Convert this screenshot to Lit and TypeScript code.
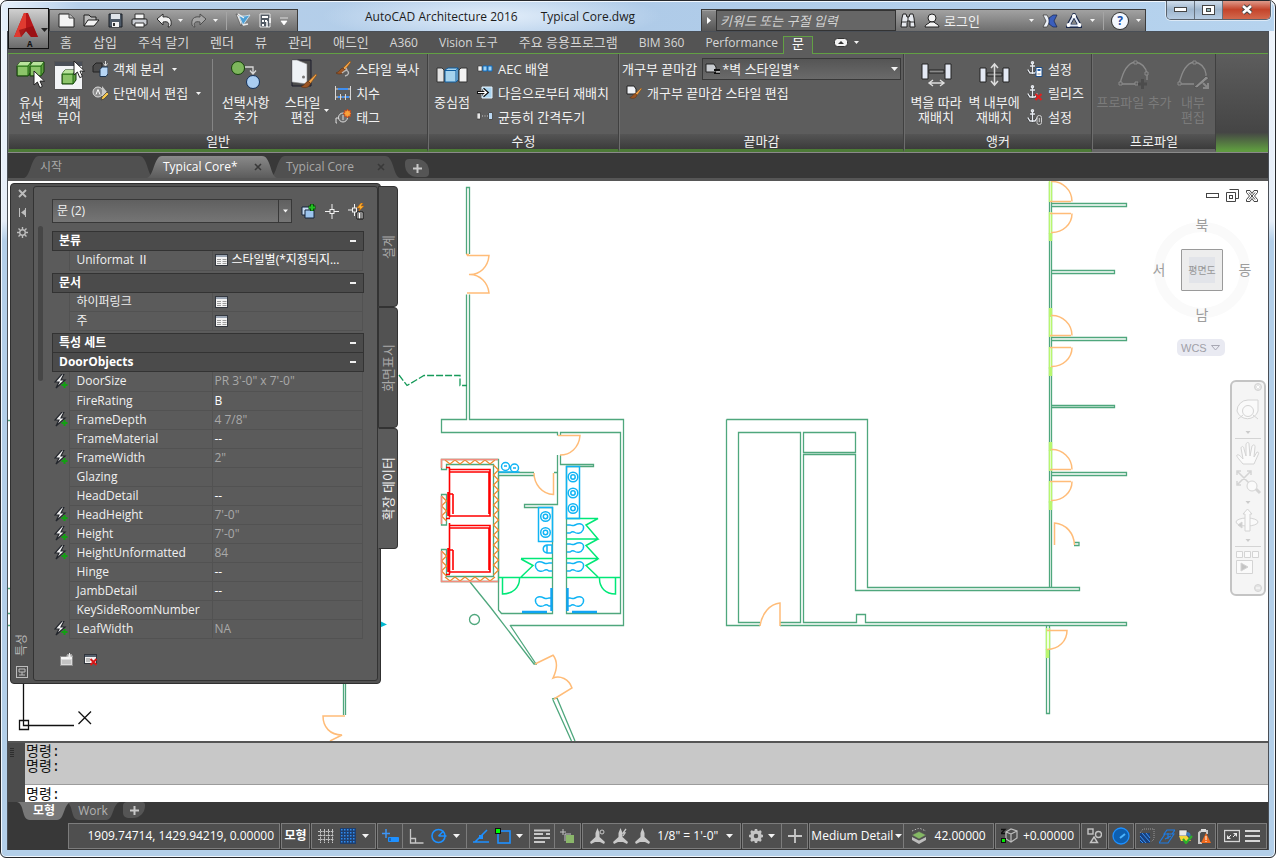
import { LitElement, html, css, svg, nothing, TemplateResult } from "lit";
import { customElement, state } from "lit/decorators.js";
import { classMap } from "lit/directives/class-map.js";

type Art = ReturnType<typeof svg>;

const icon = (w: number, h: number, art: Art, cls = "") =>
  html`<svg class="ic ${cls}" width=${w} height=${h} viewBox="0 0 ${w} ${h}" aria-hidden="true">${art}</svg>`;

const caret = html`<svg class="ic caret" width="7" height="4" viewBox="0 0 7 4" aria-hidden="true"><path d="M0 0h7L3.5 4z" fill="#f4f4f4"/></svg>`;
const smallCaret = html`<svg class="ic caret" width="5" height="3" viewBox="0 0 5 3" aria-hidden="true"><path d="M0 0h5L2.5 3z" fill="#f4f4f4"/></svg>`;

const cursor = svg`<path d="M0 0v14l3.4-3 2.4 5.6 2.6-1.1-2.4-5.4h4.6z" fill="#fff" stroke="#222" stroke-width="1"/>`;
const brush = svg`<path d="M15 0 8 7l2 2 6-8z" fill="#f0a045" stroke="#7a4a18" stroke-width=".6"/><path d="M8 7c-3 0-3 4-7 5 3 2 8 1 9-3z" fill="#9a5525" stroke="#5e3010" stroke-width=".6"/>`;
const cube = svg`<path d="M1 5 4 1h11v10l-3 4H1z" fill="#5fa041" stroke="#123c08"/><path d="M1 5 4 1h11l-3 4z" fill="#b9e39c"/><path d="M2 6h10v8H2z" fill="#8cc46a"/><path d="M12 5v10M1 5h11l3-4" stroke="#1f6a10" fill="none"/>`;

const anchor = svg`<g stroke="#303030" stroke-width="2.600" fill="none"><path d="M5.500 2v11M1 9l2 3h5l2-3M3 5h5"/></g><g stroke="#e8ecf2" stroke-width="1.400" fill="none"><circle cx="5.500" cy="1.800" r="1"/><path d="M5.500 3v10M0.800 8.500 3 12h5l2.200-3.500M3 5h5"/></g>`;

const art: Record<string, Art> = {
  newFile: svg`<path d="M1 1h10l5 4v9H1z" fill="#f4f4f4" stroke="#222"/><path d="M11 1v4h5" fill="#bbb" stroke="#444"/>`,
  open: svg`<path d="M1 13V2h5l2 2h5v3" fill="#bcbcbc" stroke="#1f1f1f"/><path d="m1 13 4-6h11l-5 6z" fill="#f4f4f4" stroke="#1f1f1f"/>`,
  save: svg`<path d="M1 1h13v13H1z" fill="#4e5a68" stroke="#1a1e24"/><path d="M3 1h9v5H3z" fill="#dfe4ea"/><path d="M4 9h7v5H4z" fill="#f2f2f2"/><path d="M5 10h2v3H5z" fill="#333"/>`,
  print: svg`<path d="M4 1h9v5H4z" fill="#f6f6f6" stroke="#333"/><rect x="1" y="6" width="15" height="6" rx="1" fill="#c9ccd2" stroke="#222"/><path d="M4 10h9v4H4z" fill="#fff" stroke="#333"/>`,
  undo: svg`<path d="M1 6 7 1v3c6-1 9 2 8 8-1 2-2 2-3 2 2-4 0-6-5-5v3z" fill="#f0f0f0" stroke="#2a2a2a"/>`,
  redo: svg`<path d="M15 6 9 1v3C3 3 0 6 1 12c1 2 2 2 3 2-2-4 0-6 5-5v3z" fill="#a6a6a6" stroke="#4e4e4e"/>`,
  reconcile: svg`<path d="m1 1 3 1 3 8-1 3z" fill="#e8e8e8" stroke="#444" stroke-width=".6"/><path d="m4 3 4 9 7-10-5 1z" fill="#4c9ed4" stroke="#dcecf8" stroke-width=".8"/><path d="m3 1 6 4M8 12l5-1" stroke="#eee" stroke-width="1.500"/>`,
  project: svg`<path d="M1 1h10v13H1z" fill="#525a64" stroke="#e8e8e8"/><path d="M3 3h6v2H3zM3 7h2v2H3zM3 11h2v2H3zM6 7h2v2H6z" fill="#fff"/><path d="M8 8v6M11 5v5" stroke="#fff" stroke-width="1.500"/>`,
  binoc: svg`<path d="M1 14 2 5l1-4h3l1 3h2l1-3h3l1 4 1 9h-5V8H7v6z" fill="#e6e9ee" stroke="#222"/><path d="M2 9h4M10 9h4M8 4v4" stroke="#333"/>`,
  user: svg`<circle cx="8" cy="5" r="4" fill="#f4f4f4" stroke="#222"/><path d="M1 14c0-3 4-3 5-5h4c1 2 5 2 5 5z" fill="#f4f4f4" stroke="#222"/>`,
  exchange: svg`<path d="M1 1h4l3 6-3 6H1l3-6z" fill="#eef2f8" stroke="#333" stroke-width=".7"/><path d="M15 1h-4L7 4v6l4 3h4l-3-6z" fill="#3a5ebc" stroke="#16244e" stroke-width=".7"/>`,
  a360: svg`<path d="M8 2 14 13H2z" fill="none" stroke="#1c2a4c" stroke-width="4"/><path d="M8 2.500 13.500 12.500H2.500z" fill="none" stroke="#dfe7f5" stroke-width="2"/><circle cx="8" cy="3" r="2" fill="#fff"/><circle cx="2.500" cy="12" r="2" fill="#fff"/><circle cx="13.500" cy="12" r="2" fill="#fff"/>`,
  select: svg`<g transform="translate(0 1)">${cube}</g><g transform="translate(13 1)">${cube}</g><g transform="translate(18 11)">${cursor}</g>`,
  viewer: svg`<rect x=".5" y="1.500" width="28" height="28" fill="#f2f4f6" stroke="#555"/><path d="M1 2h27v4H1z" fill="#4a4f58"/><g transform="translate(7 9)">${cube}</g><g transform="translate(20 1)">${cursor}</g>`,
  isolate: svg`<path d="m1 5 3-3h6v7l-2 2H1z" fill="#4b4b4b" stroke="#222"/><path d="M8 8.500 10 6h6v7l-2 2.500H8z" fill="#b7d6f5" stroke="#1c3450"/><path d="M13.500 0v4m-2-1.500L13.500 5l2-2.500" stroke="#e0e0e0" fill="none"/>`,
  section: svg`<circle cx="6" cy="7" r="5" fill="#8c8c8c" stroke="#ddd"/><path d="m10 1 5 6-5 6z" fill="#c8c8c8"/><path d="m4 9.500 2-5 2 5" stroke="#fff" fill="none"/><path d="m9 15 1-3 5-5 2 2-5 5z" fill="#f6c64b" stroke="#333" stroke-width=".7"/>`,
  addSel: svg`<circle cx="8" cy="8" r="6.500" fill="#7db65c" stroke="#14400a"/><path d="M15 7h8v6m-3-2.500L23 14l3-3.500" fill="none" stroke="#d8d8d8" stroke-width="1.300"/><circle cx="23" cy="22" r="6.500" fill="#a9cdf2" stroke="#12305a"/>`,
  style: svg`<path d="M3 1h19v26H3z" fill="#4c4c4c" stroke="#1c1c2c"/><path d="M3 1h5l10 4v20L3 23z" fill="#eef2f6" stroke="#888" stroke-width=".6"/><circle cx="14.500" cy="18" r="1.500" fill="#777"/><g transform="translate(11 15) scale(1.050)">${brush}</g>`,
  styleCopy: svg`${brush}<path d="M7 12l4-3c4 2 3 5-1 6m1-8 1 2-2 1" stroke="#b9b9b9" fill="none" stroke-width="1.300"/>`,
  dim: svg`<path d="M.5 1v14M15.500 1v14M1 4h14M1 12h14M5.500 9v6M10.500 9v6" stroke="#d8d8d8" fill="none"/><path d="M3 4h10M3 12h2M7 12h2M11 12h3" stroke="#3f8ef0" stroke-width="2"/>`,
  tag: svg`<circle cx="8" cy="8.500" r="4.500" fill="#6b6b6b" stroke="#ddd"/><path d="M1 14V9h3M8 6v5M1 14h1" stroke="#ddd" fill="none"/><path d="m12.500 0 1 2 2-.5-.5 2 2 1-2 1 .5 2-2-.5-1 2-1-2-2 .5.500-2-2-1 2-1-.5-2 2 .5z" fill="#f9a23c" stroke="#d23c10" stroke-width=".7"/>`,
  center: svg`<path d="M1 2h5l2 2v12H1z" fill="#e4e4e4" stroke="#333"/><path d="M9 4l3-2h10v12l-2 2H9z" fill="#a5d3ee" stroke="#0f5c9e"/><path d="M9 4.500h11v11M20 4.500 22 2" stroke="#0f5c9e" fill="none"/><path d="M23 4l2-2h6v14h-8z" fill="#f2f2f2" stroke="#333"/>`,
  array: svg`<path d="M1 5h4v5H1z" fill="#f2f2f2" stroke="#333" stroke-width=".6"/><path d="M6 5h4v5H6zM11 5h4v5h-4z" fill="#9ed1f2" stroke="#0f6cc0"/>`,
  repos: svg`<path d="M5 2h10v11H5z" fill="#a9d4f0" stroke="#e6f2fb"/><path d="M0 7.500h8M6 4l4 3.500L6 11" stroke="#111" stroke-width="3" fill="none"/><path d="M1 7.500h8M6 4.500l3.500 3-3.500 3" stroke="#fff" stroke-width="1.200" fill="none"/>`,
  space: svg`<path d="M0 4h3.500v6H0zM12 4h3.500v6H12z" fill="#e8e8e8" stroke="#222" stroke-width=".6"/><path d="M5 7h1M7.500 7h1M10 7h1" stroke="#ccc"/><path d="M12 4h3v6h-3z" fill="#b9d7f2"/>`,
  endcap: svg`<path d="M1 2h8l2 3v5H1z" fill="#c9ccd0" stroke="#222"/><path d="M9 8h6M9 11h6" stroke="#111" stroke-width="2"/><path d="M11 10h4" stroke="#fff"/>`,
  endcapEdit: svg`<path d="M1 1h7l2 3v5H1z" fill="#f0f2f6" stroke="#222"/><g transform="translate(3 3) scale(.8)">${brush}</g>`,
  wallAlong: svg`<path d="M1 2h6v15H1zM24 2h6v15h-6z" fill="#e4e9f4" stroke="#222"/><path d="M8 8h15v3H8z" fill="#8a8a8a" stroke="#222"/><path d="M8 21h15m-11-3-4 3 4 3m7-6 4 3-4 3" stroke="#ddd" stroke-width="1.400" fill="none"/>`,
  wallIn: svg`<path d="M1 6h6v14H1zM24 6h6v14h-6z" fill="#e4e9f4" stroke="#222"/><path d="M8 11h15v3H8z" fill="#8a8a8a" stroke="#222"/><path d="M15.500 3v19m-3.500-16 3.500-4L19 6m-7 13 3.500 4 3.500-4" stroke="#ddd" stroke-width="1.500" fill="none"/>`,
  anchorSet: svg`${anchor}<path d="M9 6.500h6v9H9z" fill="#fff" stroke="#1b4f8e"/><path d="M10.500 8h3v2h-3z" fill="#1b5fae"/><path d="M10.500 13h3" stroke="#888"/>`,
  anchorRel: svg`${anchor}<path d="m8.500 9 6 6m0-6-6 6" stroke="#e02020" stroke-width="2"/>`,
  anchorClip: svg`${anchor}<rect x="10" y="6.500" width="4.500" height="9" rx="2" fill="none" stroke="#cfcfcf"/><path d="M12.300 9v4" stroke="#cfcfcf"/>`,
  profAdd: svg`<path d="M2 25h17M2 25C5 12 10 4 17 3c8 1 11 6 12 12v6" fill="none" stroke="#8a8a8a" stroke-width="1.300"/><path d="M16 2h3v3h-3zM1 23h3v3H1zM27 13h3v3h-3zM17 23h3v3h-3z" fill="#5d5d5d" stroke="#8a8a8a"/><path d="M20 25h9M24.500 20v10" stroke="#4c4c4c" stroke-width="3"/>`,
  profEdit: svg`<path d="M2 25h15M2 25C5 12 10 4 17 3c8 1 11 6 12 12v2" fill="none" stroke="#8a8a8a" stroke-width="1.300"/><path d="M16 2h3v3h-3zM1 23h3v3H1z" fill="#5d5d5d" stroke="#8a8a8a"/><path d="m17 28 12-11 3 2-12 10z" fill="#8e8e8e" stroke="#555"/><path d="m26 24 5 5m0-5v5h-5" stroke="#888" stroke-width="2" fill="none"/>`,
  cells: svg`<rect x=".5" y=".5" width="12" height="11" fill="#f4f4f4" stroke="#34383f"/><path d="M1 1h11v2H1z" fill="#9aa4b2"/><path d="M2 5.500h4M7.500 5.500h4M2 7.500h4M7.500 7.500h4M2 9.500h4M7.500 9.500h4" stroke="#9a9a9a"/>`,
  bolt: svg`<path d="M8 0 1 8h4l-3 6 9-8H7l3-6z" fill="#f2f2f2" stroke="#23262c" stroke-width="1.200"/><path d="M10.500 8v6M7.500 11h6" stroke="#12a012" stroke-width="2"/>`,
  quick: svg`<path d="M1 3h9v8H1z" fill="#c7dcf2" stroke="#15253c"/><path d="M4 6h9v8H4z" fill="#9cc4ee" stroke="#15253c"/><path d="M11 0v7M7.500 3.500h7" stroke="#0a4a0a" stroke-width="4"/><path d="M11 .5v6M8 3.500h6" stroke="#20c020" stroke-width="2"/>`,
  pick: svg`<path d="M0 7.500h5M9 7.500h5M7 0v5.500M7 9.500V15" stroke="#f2f2f2"/><rect x="5" y="5.500" width="4" height="4" fill="none" stroke="#f2f2f2"/>`,
  quickSel: svg`<path d="M0 7h5M6.500 1v4M6.500 9v4" stroke="#f2f2f2"/><rect x="4.500" y="5" width="4" height="4" fill="none" stroke="#f2f2f2"/><path d="m13 0-4 5h3l-1 3 5-5h-3l2-3z" fill="#f9b233" stroke="#c45f00" stroke-width=".6"/><path d="M9 9h6v7H9z" fill="#fff" stroke="#111"/><path d="M10 11h1m1 0h2m-4 2h1m1 0h2m-4 2h1m1 0h2" stroke="#111"/>`,
  addSet: svg`<rect x=".5" y="3.500" width="12" height="9" fill="#dcdcdc" stroke="#8b8b8b"/><path d="M1 4h11v2H1z" fill="#f6f6f6"/><path d="M2 8h9M2 10h9" stroke="#aaa"/><path d="M9.500 0v6M6.500 3h6M7.500 1l4 4m0-4-4 4" stroke="#eee"/>`,
  delSet: svg`<rect x=".5" y="1.500" width="12" height="9" fill="#f2f2f2" stroke="#31353c"/><path d="M1 2h11v2H1z" fill="#56616e"/><path d="M2 6h4M2 8h4" stroke="#888"/><path d="m6.500 6 6 6m0-6-6 6" stroke="#d91818" stroke-width="2"/>`,
  grid: svg`<path d="M2.500 1v14M6.500 1v14M10.500 1v14M14.500 1v14M0 3.500h16M0 7.500h16M0 11.500h16" stroke="#c4c4c4" stroke-dasharray="2 .6" fill="none"/>`,
  snap: svg`<rect width="16" height="16" fill="#1f3f6e"/><g fill="#2f8bf0">${[1, 4, 7, 10, 13].map((y) => [1, 4, 7, 10, 13].map((x) => svg`<rect x=${x} y=${y} width="1.500" height="1.500"/>`))}</g>`,
  dyn: svg`<path d="M4 0v9M0 4.500h8" stroke="#3d95f5" stroke-width="1.500"/><rect x="6" y="8" width="11" height="5" rx="1" fill="#1e90ff"/><path d="M8 9v3" stroke="#0c3c78"/>`,
  ortho: svg`<path d="M1.500 0v14h13M1.500 9.500h5v4.500" stroke="#c6c6c6" stroke-width="1.300" fill="none"/>`,
  polar: svg`<g stroke="#1e90ff" fill="none" stroke-width="1.600"><circle cx="7.500" cy="8" r="6.500"/><path d="M7.500 8h8M7.500 8l5-5"/></g>`,
  iso: svg`<path d="M0 14h16M2 14 14 2" stroke="#1e90ff" stroke-width="1.600"/><rect x="6" y="7" width="4" height="4" fill="#1e90ff"/>`,
  osnap: svg`<rect x="3" y="3" width="12" height="12" fill="none" stroke="#1e90ff" stroke-width="1.600"/><rect x=".5" y=".5" width="5" height="5" fill="#0f0" stroke="#111"/>`,
  lweight: svg`<path d="M0 1.500h16M0 5h9M12 5h4M0 9h16M0 13h11" stroke="#c8c8c8" stroke-width="2.200"/>`,
  cycle: svg`<path d="M0 3h6M3 0v6M5 5h6M5 5v7" stroke="#c4c4c4" fill="none"/><rect x="6" y="6" width="8" height="8" fill="#8ab66a"/>`,
  anno: svg`<path d="M7.500 0 9.500 5v4l5.500 5-1 2-4-2H5l-4 2-1-2 5.500-5V5z" fill="#c9c9c9"/>`,
  gear: svg`<circle cx="7" cy="7" r="4" fill="none" stroke="#c4c4c4" stroke-width="3.500"/><path d="M7 0v3M7 11v3M0 7h3M11 7h3M2 2l2 2M10 10l2 2M12 2l-2 2M4 10l-2 2" stroke="#c4c4c4" stroke-width="2.500"/>`,
  plus: svg`<path d="M7 0v14M0 7h14" stroke="#c8c8c8" stroke-width="1.800"/>`,
  cut: svg`<path d="m1 9 7 3.500L15 9v3l-7 4-7-4z" fill="#bdbdbd"/><path d="m1 7 7-3.500L15 7l-7 4z" fill="#84b864" stroke="#555" stroke-width=".5"/><path d="m1 3 7-3 7 3" stroke="#bbb" fill="none" stroke-dasharray="1.500 1.500"/>`,
  elev: svg`<path d="M5 4 10 1l6 2v7l-6 4-5-3zM10 14V6m0 0 6-3m-6 3L5 4" stroke="#bdbdbd" fill="none" stroke-width="1.200"/><path d="M0 1.500h4l-4 4h4" stroke="#111" fill="none" stroke-width="1.300"/><rect x=".5" y="10.500" width="4" height="4" fill="#0e0" stroke="#111"/>`,
  shapes: svg`<g fill="none" stroke="#c4c4c4" stroke-width="1.400"><rect x="1" y="1" width="5" height="5"/><circle cx="11.500" cy="6.500" r="3"/><path d="m7 9 3.500 5.500h-7z"/></g>`,
  clean: svg`<circle cx="9" cy="9" r="8" fill="#0d5fb0" stroke="#1e90ff" stroke-width="1.300"/><path d="m8 11 5-4" stroke="#4bb4ff" stroke-width="2"/>`,
  box3: svg`<path d="M1 5 4 1h11v10l-3 3" fill="none" stroke="#999" stroke-dasharray="1 1"/><path d="M1 5h10v10H1z" fill="#17407e"/><path d="m1 8 6 7M1 12l3 3M3 5l8 9M7 5l4 5" stroke="#3d95f5"/>`,
  layer: svg`<path d="m5 5 3-4h8l-3 4zM0 14l6-9h9l-6 9z" fill="none" stroke="#1e7be0" stroke-width="1.200"/><path d="m6 10 6-3M9 4v6" stroke="#1e7be0" stroke-width="1.200"/>`,
  trust: svg`<path d="M1 1h8v6H1z" fill="#e8e8e8" stroke="#333" stroke-width=".6"/><path d="M9 3c4 0 4 4 3 5L8 6z" fill="#3c7cc0"/><path d="M1 7h8l4 5H3z" fill="#f4d636"/><path d="m5 10 3 4 6-7" stroke="#2cae2c" stroke-width="2.200" fill="none"/>`,
  warn: svg`<path d="M8 3h2v3M5 15H2V5l2-2" fill="none" stroke="#c8c8c8" stroke-width="2"/><path d="M4 1h5v3H4z" fill="#ddd"/><path d="m9 5 5 10H4z" fill="#f06a1c"/><path d="M9 8v4M9 13v1" stroke="#fff"/>`,
  full: svg`<rect x=".5" y="1.500" width="15" height="11" fill="none" stroke="#d6d6d6" stroke-width="1.300"/><path d="M9 4h4v4zM3 6v4h4z" fill="#e8e8e8"/><path d="m9 8 3-3M7 6 4 9" stroke="#e8e8e8"/>`,
  burger: svg`<path d="M0 2h15M0 7h15M0 12h15" stroke="#d6d6d6" stroke-width="2"/>`,
};

const ribbonTabs: [string, boolean][] = [
  ["홈", false], ["삽입", false], ["주석 달기", false], ["렌더", false], ["뷰", false], ["관리", false],
  ["애드인", false], ["A360", true], ["Vision 도구", true], ["주요 응용프로그램", false], ["BIM 360", true], ["Performance", true],
];

interface Prop { name: string; value?: string; auto?: boolean; cells?: boolean; }

const doorProps: Prop[] = [
  { name: "DoorSize", value: "PR 3'-0\" x 7'-0\"", auto: true },
  { name: "FireRating", value: "B" },
  { name: "FrameDepth", value: "4 7/8\"", auto: true },
  { name: "FrameMaterial", value: "--" },
  { name: "FrameWidth", value: "2\"", auto: true },
  { name: "Glazing" },
  { name: "HeadDetail", value: "--" },
  { name: "HeadHeight", value: "7'-0\"", auto: true },
  { name: "Height", value: "7'-0\"", auto: true },
  { name: "HeightUnformatted", value: "84", auto: true },
  { name: "Hinge", value: "--" },
  { name: "JambDetail", value: "--" },
  { name: "KeySideRoomNumber" },
  { name: "LeafWidth", value: "NA", auto: true },
];

@customElement("app-root")
export class AppRoot extends LitElement {
  @state() private closed: Record<string, boolean> = {};

  static styles = css`
    :host { display: block; font: 12px/16px "Open Sans", "Noto Sans CJK KR", sans-serif; color: #f0f0f0; }
    * { box-sizing: border-box; }
    button, select, input { font: inherit; color: inherit; background: none; border: 0; padding: 0; margin: 0; border-radius: 0; }
    select { appearance: none; }
    .ic { display: block; flex: none; }
    .ko { font-size: 13px; }
    .window { height: 100vh; min-height: 700px; display: flex; flex-direction: column; padding: 0 6px 7px 7px; border: 1px solid #26282c; border-radius: 7px 7px 6px 6px; position: relative;
      background: linear-gradient(#eef4fb 0, #e6eef8 220px, #b3cfe9 240px, #b3cfe9 100%); box-shadow: inset 0 0 0 1px #f2f8fe; overflow: hidden; }
    .window::before { content: ""; position: absolute; inset: 1px 1px auto; height: 29px; border-radius: 6px 6px 0 0;
      background: radial-gradient(ellipse 170px 26px at 490px 14px, #e3eefa, #e3eefa00), linear-gradient(90deg, #e6f0fa 0, #b7d0ea 6%, #afcbe8 50%, #b6d3ee 100%); }
    .title { height: 30px; flex: none; display: flex; align-items: flex-start; padding: 8px 0 0 41px; position: relative; }
    .caption { flex: 1; min-width: 0; display: flex; gap: 23px; padding-left: 67px; color: #1c1c1c; white-space: nowrap; line-height: 15px; overflow: hidden; }
    .bar { height: 22px; display: flex; align-items: center; border: 1px solid #3c3c3c; border-bottom: 0; background: linear-gradient(#a2a2a2, #6e6e6e); flex: none; }
    .qat { width: 249px; padding-left: 8px; gap: 8px; }
    .qat .sep, .info .sep { width: 1px; height: 18px; background: #a5a5a5; }
    .pair { display: flex; align-items: center; gap: 6px; }
    .info { width: 445px; margin-right: 123px; }
    .info .go { width: 14px; height: 20px; display: grid; place-items: center; background: linear-gradient(#888, #555); }
    .search { width: 180px; height: 21px; padding: 0 12px 0 3px; background: #666; border: 1px solid #333; font-style: italic; font-size: 13px; }
    .search::placeholder { color: #d2d2d2; opacity: 1; }
    .info .who { flex: 1; display: flex; align-items: center; gap: 8px; padding: 0 8px 0 4px; }
    .who span { display: flex; align-items: center; gap: 4px; }
    .who .login { flex: 1; }
    .info .tail { display: flex; align-items: center; gap: 8px; padding-right: 4px; }
    .help { width: 16px; height: 16px; border-radius: 50%; background: #f4f8ff; color: #1b4fa8; font-weight: 700; line-height: 15px; text-align: center; box-shadow: 0 0 0 1px #333; }
    .wincontrols { position: absolute; top: -1px; right: -2px; display: flex; border: 1px solid #59626c; border-top: 0; border-radius: 0 0 5px 5px; overflow: hidden; box-shadow: 0 0 0 1px #dce9f6; }
    .wincontrols button { width: 28px; height: 19px; display: grid; place-items: center; background: linear-gradient(#d7e3f0, #9fb6cd 50%, #b7cce2); border-right: 1px solid #67727e; }
    .wincontrols .shut { width: 47px; border: 0; background: linear-gradient(#e2a495, #c4442b 50%, #d2694d); }
    .logo { position: absolute; z-index: 3; left: 7px; top: 7px; width: 41px; height: 41px; border: 1px solid #111; background: linear-gradient(#d0d0d0, #6b6b6b); display: grid; place-items: center; }
    .client { flex: 1; min-height: 0; display: flex; flex-direction: column; border: 1px solid #4a4f56; border-width: 1px 1px 0; background: #383838; position: relative; margin-left: -1px; }
    .tabs { height: 21px; flex: none; display: flex; align-items: center; gap: 21px; padding: 0 0 0 52px; background: #545454; color: #d6d6d6; white-space: nowrap; }
    .tabs button { height: 20px; line-height: 19px; }
    .tabs .lat { font-size: 12px; }
    .tabs .on { width: 30px; height: 18px; align-self: flex-end; margin: 0 0 -1px -16px; padding-bottom: 4px; line-height: 13px; background: #5d5d5d; border: 1px solid #62a044; border-bottom: 0; color: #fff; position: relative; z-index: 1; }
    .tabs .fold { display: flex; align-items: center; gap: 6px; }
    .ribbon { flex: none; display: flex; height: 100px; border-top: 1px solid #62a044; border-bottom: 1px solid #8a8a8a; background: linear-gradient(#5d5d5d 0, #454545 80%, #5f9a40 98%); font-size: 13px; line-height: 15px; color: #f2f2f2; }
    .panel { display: flex; flex-direction: column; background: #5d5d5d; border-right: 1px solid #404040; border-left: 1px solid #6d6d6d; border-bottom: 3px solid #4c7a36; flex: none; }
    .panel.last { border-bottom-color: #666; }
    .panel h2 { margin: 0; font: inherit; height: 15px; line-height: 14px; text-align: center; background: linear-gradient(#555, #3b3b3b); }
    .body { flex: 1; display: flex; padding: 3px 2px 0; white-space: nowrap; }
    .body.wide { padding-left: 3px; }
    .big { display: flex; flex-direction: column; align-items: center; gap: 3px; text-align: center; line-height: 15px; position: relative; padding-top: 1px; }
    .big .pic { height: 34px; display: grid; place-items: center; }
    .big .caret { position: absolute; right: 2px; bottom: 22px; }
    .w38 { width: 38px; } .w56 { width: 57px; } .w42 { width: 42px; } .w58 { width: 58px; } .w76 { width: 82px; } .w44 { width: 42px; }
    .off { color: #7b7b7b; }
    .list { display: flex; flex-direction: column; padding-left: 4px; }
    .list button { height: 24px; display: flex; align-items: center; gap: 5px; }
    .list button .caret { margin-left: 3px; }
    .rule { width: 1px; height: 72px; margin: 2px 4px 0 11px; background: #858585; }
    .endcap { display: flex; flex-direction: column; }
    .endcap .row { display: flex; height: 24px; align-items: center; gap: 5px; }
    .combo { position: relative; display: flex; align-items: center; }
    .combo select { width: 199px; height: 22px; padding-left: 19px; background: linear-gradient(#555, #6a6a6a); border: 1px solid #383838; }
    .combo .ic { position: absolute; left: 3px; pointer-events: none; }
    .combo .caret { left: auto; right: 3px; }
    .docs { height: 25px; flex: none; display: flex; align-items: flex-end; padding-left: 16px; color: #a8a8a8; }
    .doc { width: 130px; height: 22px; position: relative; display: flex; align-items: center; padding: 0 15px 0 16px; margin-right: -7px; justify-content: space-between; }
    .doc > svg.bg { position: absolute; inset: 0; width: 100%; height: 100%; }
    .doc > * { position: relative; }
    .doc.on { color: #fff; z-index: 1; }
    .plus { width: 24px; height: 18px; margin: 0 0 1px 12px; background: #555; border-radius: 4px 12px 4px 12px; display: grid; place-items: center; }
    .stage { flex: 1; min-height: 0; position: relative; background: #fff; border-top: 3px solid #565656; overflow: hidden; }
    .drawing { position: absolute; left: 0; top: 0; width: 100%; height: 100%; }
    .mdi { position: absolute; top: 8px; right: 10px; display: flex; gap: 7px; align-items: center; }
    .cube { position: absolute; right: 15px; top: 36px; width: 102px; height: 106px; display: grid; grid-template: 16px 1fr 16px / 16px 1fr 16px; place-items: center; color: #9d9d9d; font-size: 14px; }
    .cube > span, .cube > button { position: relative; }
    .cube > span.ring { position: absolute; left: 3px; top: 5px; width: 96px; height: 96px; border-radius: 50%; border: 10px solid #fafafa; }
    .cube .n, .cube .s { grid-column: 2; } .cube .s { grid-row: 3; } .cube .w { grid-row: 2; } .cube .e { grid-row: 2; grid-column: 3; }
    .cube .face { grid-area: 2 / 2; width: 42px; height: 42px; border: 1px solid #9a9a9a; background: linear-gradient(#e2e4e9, #e2e4e9) center / 26px 26px no-repeat #ededed; font-size: 10px; color: #989898; border-radius: 1px; }
    .wcs { position: absolute; right: 43px; top: 158px; width: 48px; height: 17px; border-radius: 5px; background: #e9eaf2; color: #a0a0a8; font: 11px/16px "Liberation Sans", sans-serif; display: flex; align-items: center; justify-content: space-between; padding: 0 5px 0 4px; }
    .nav { position: absolute; right: 2px; top: 199px; width: 36px; height: 216px; border: 2px solid #c4c4c4; border-radius: 6px; background: #f5f5f5; }
    .palette { position: absolute; left: 2px; top: 2px; display: flex; align-items: flex-start; }
    .shell { width: 371px; height: 501px; display: flex; background: #525252; border: 1px solid #303030; border-radius: 4px; padding: 2px 2px 2px 0; }
    .rail { width: 22px; display: flex; flex-direction: column; align-items: center; gap: 10px; padding: 3px 0 3px; }
    .vert { writing-mode: vertical-rl; text-orientation: sideways; transform: rotate(180deg); font-size: 13px; line-height: 16px; white-space: nowrap; }
    .rail .vert { margin-top: auto; color: #b5b5b5; font-size: 12px; }
    .pane { flex: 1; background: #5b5b5b; border: 1px solid #333; border-radius: 3px; position: relative; padding: 12px 13px 0 18px; display: flex; flex-direction: column; }
    .scroll { position: absolute; left: 4px; top: 39px; width: 5px; height: 155px; border-radius: 3px; background: #464646; }
    .pick { display: flex; align-items: center; gap: 9px; height: 24px; margin-bottom: 8px; }
    .pick .combo select { width: 240px; height: 24px; padding-left: 4px; background: linear-gradient(#606060, #757575); }
    .pick .combo .caret { right: 4px; width: 5px; }
    .pick .combo i { position: absolute; right: 13px; top: 0; width: 1px; height: 24px; background: #383838; pointer-events: none; }
    .group { margin-bottom: 2px; }
    .group.tight { margin-bottom: 0; }
    .head { width: 312px; height: 20px; display: flex; align-items: center; justify-content: space-between; padding: 0 7px 0 6px; background: #4b4b4b; border: 1px solid #333; color: #fff; font-weight: 700; }
    .group.tight .head { height: 19px; border-bottom: 0; }
    .head i { width: 6px; height: 2px; background: #f0f0f0; }
    .props { width: 311px; border-collapse: collapse; table-layout: fixed; }
    .props th, .props td { height: 19px; padding: 0; font-weight: 400; text-align: left; line-height: 18px; }
    .props .flag { width: 17px; }
    .props .flag .ic { margin-left: 2px; }
    .props th { width: 143px; padding-left: 7px; border: 1px solid #525252; border-top: 0; }
    .props td.val { padding-left: 2px; border: 1px solid #525252; border-top: 0; color: #fff; }
    .props td.auto { color: #a9a9a9; }
    .cellbtn { display: flex; align-items: center; gap: 4px; height: 18px; }
    .foot { display: flex; gap: 11px; padding: 12px 0 0 8px; }
    .side { display: flex; flex-direction: column; margin: 3px 0 0 -3px; }
    .side button { width: 20px; height: 121px; display: grid; place-items: center; background: #525252; color: #a8a8a8; border: 1px solid #333; border-radius: 0 4px 4px 0; }
    .side .on { background: #5b5b5b; color: #f0f0f0; border-left-color: #5b5b5b; }
    .cmd { flex: none; display: grid; grid-template-columns: 17px 1fr; border-top: 2px solid #555; background: #4c4c4c; color: #111; font: 14px/15px "Liberation Mono", "Noto Sans CJK KR", monospace; }
    .grip { margin: 5px 0 0 2px; width: 4px; height: 10px; background: repeating-linear-gradient(#2e2e2e 0 1px, transparent 1px 2px); }
    .hist { background: #c8c8c8; height: 42px; border-bottom: 1px solid #9c9c9c; padding: 2px 0 0 1px; }
    .entry { height: 17px; background: #fff; display: flex; align-items: flex-start; padding: 3px 0 0 1px; overflow: hidden; }
    .entry input { flex: 1; outline: 0; height: 14px; }
    .layouts { height: 20px; flex: none; display: flex; align-items: flex-start; padding-left: 9px; font-size: 12px; color: #b2b2b2; }
    .layouts .lay { width: 54px; height: 18px; position: relative; margin-right: -5px; }
    .layouts .lay svg { position: absolute; inset: 0; width: 100%; height: 100%; }
    .layouts .lay span { position: relative; }
    .layouts .on { color: #fff; font-weight: 700; z-index: 1; }
    .layouts .add { width: 22px; height: 16px; margin-left: 8px; background: #555; border-radius: 4px 3px 12px 5px; display: grid; place-items: center; }
    .status { height: 28px; flex: none; display: flex; gap: 1px; padding: 1px 1px 1px 60px; white-space: nowrap; background: #383838; color: #fff; }
    .cell { display: flex; border: 1px solid #7c7c7c; background: #4f4f4f; height: 26px; }
    .cell > * { display: flex; align-items: center; justify-content: space-evenly; border-right: 1px solid #7c7c7c; }
    .cell > *:last-child { border-right: 0; flex: 1; }
    .coords { flex: 1; min-width: 190px; }
    .cell .xyz { justify-content: flex-end; padding-right: 5px; }
    .cell .model { font-weight: 700; }
  `;

  private big(name: string, w: number, h: number, l1: string, l2: string, cls: string, more = false) {
    return html`<button class="big ${cls}"><span class="pic">${icon(w, h, art[name])}</span><span>${l1}${l2 ? html`<br />${l2}` : nothing}</span>${more ? smallCaret : nothing}</button>`;
  }

  private small(name: string, label: string, more = false) {
    return html`<button>${icon(16, 16, art[name])}<span>${label}</span>${more ? smallCaret : nothing}</button>`;
  }

  private titleBar() {
    return html`
      <button class="logo" aria-label="응용프로그램 메뉴">${icon(38, 38, svg`<path d="M4 27 14 3h4l10 24h-7l-5-6-5 6z" fill="#b8161a"/><path d="M14 3h2v15l-5 9H4z" fill="#e03a30"/><path d="m9 20 14-4 5 11h-7l-5-6-5 6z" fill="#8f0f12" opacity=".7"/><path d="M31 18h7l-3.500 4z" fill="#222"/><text x="17" y="37" font-size="8" font-weight="700" fill="#111" font-family="Open Sans">A</text>`)}</button>
      <header class="title">
        <div class="bar qat">
          ${icon(17, 15, art.newFile)}${icon(17, 15, art.open)}${icon(15, 15, art.save)}${icon(17, 15, art.print)}
          <span class="pair">${icon(16, 15, art.undo)}${smallCaret}</span>
          <span class="pair">${icon(16, 15, art.redo)}${smallCaret}</span>
          <span class="sep"></span>${icon(16, 15, art.reconcile)}${icon(13, 15, art.project)}
          ${icon(8, 8, svg`<path d="M0 1h8M1 4h6L4 8z" fill="#fff" stroke="#fff" stroke-width=".7"/>`)}
        </div>
        <div class="caption"><span>AutoCAD Architecture 2016</span><span>Typical Core.dwg</span></div>
        <div class="bar info">
          <button class="go" aria-label="검색">${icon(4, 7, svg`<path d="M0 0 4 3.500 0 7z" fill="#fff"/>`)}</button>
          <input class="search" aria-label="검색" placeholder="키워드 또는 구절 입력" />
          <div class="who">${icon(16, 15, art.binoc)}<span class="ko login">${icon(16, 15, art.user)}로그인</span>${smallCaret}</div>
          <div class="tail">${icon(16, 14, art.exchange)}${icon(16, 15, art.a360)}${smallCaret}<span class="sep"></span><button class="help" aria-label="도움말">?</button>${smallCaret}</div>
        </div>
        <div class="wincontrols">
          <button aria-label="최소화">${icon(13, 6, svg`<rect x=".5" y=".5" width="12" height="4" fill="#fff" stroke="#444"/>`)}</button>
          <button aria-label="최대화">${icon(13, 10, svg`<rect x=".5" y=".5" width="12" height="9" fill="#fff" stroke="#444"/><rect x="4.500" y="3.500" width="4" height="3" fill="#9bb" stroke="#444"/>`)}</button>
          <button class="shut" aria-label="닫기">${icon(12, 11, svg`<path d="m2 2 8 7M10 2 2 9" stroke="#444" stroke-width="4.500"/><path d="m2 2 8 7M10 2 2 9" stroke="#fff" stroke-width="2.600"/>`)}</button>
        </div>
      </header>`;
  }

  private ribbon() {
    return html`
      <nav class="tabs ko">
        ${ribbonTabs.map(([t, lat]) => html`<button class=${classMap({ lat })}>${t}</button>`)}
        <button class="on">문</button>
        <button class="fold" aria-label="리본 최소화">${icon(14, 9, svg`<rect x=".5" y=".5" width="13" height="8" rx="3" fill="#f2f2f2" stroke="#333"/><path d="M4 6h6L7 3z" fill="#333"/>`)}${smallCaret}</button>
      </nav>
      <section class="ribbon">
        <div class="panel" style="width:420px">
          <div class="body wide">
            ${this.big("select", 30, 30, "유사", "선택", "w38")}
            ${this.big("viewer", 31, 31, "객체", "뷰어", "w38")}
            <div class="list">${this.small("isolate", "객체 분리", true)}${this.small("section", "단면에서 편집", true)}</div>
            <div class="rule"></div>
            ${this.big("addSel", 32, 30, "선택사항", "추가", "w56")}
            ${this.big("style", 28, 32, "스타일", "편집", "w56", true)}
            <div class="list">${this.small("styleCopy", "스타일 복사")}${this.small("dim", "치수")}${this.small("tag", "태그")}</div>
          </div>
          <h2>일반</h2>
        </div>
        <div class="panel" style="width:191px">
          <div class="body">
            ${this.big("center", 32, 18, "중심점", "", "w42")}
            <div class="list">${this.small("array", "AEC 배열")}${this.small("repos", "다음으로부터 재배치")}${this.small("space", "균등히 간격두기")}</div>
          </div>
          <h2>수정</h2>
        </div>
        <div class="panel" style="width:285px">
          <div class="body">
            <div class="endcap">
              <div class="row"><label for="cap">개구부 끝마감</label>
                <span class="combo"><select id="cap"><option>*벽 스타일별*</option></select>${icon(16, 14, art.endcap)}${caret}</span></div>
              <div class="list">${this.small("endcapEdit", "개구부 끝마감 스타일 편집")}</div>
            </div>
          </div>
          <h2>끝마감</h2>
        </div>
        <div class="panel" style="width:188px">
          <div class="body">
            ${this.big("wallAlong", 31, 26, "벽을 따라", "재배치", "w58")}
            ${this.big("wallIn", 31, 26, "벽 내부에", "재배치", "w58")}
            <div class="list">${this.small("anchorSet", "설정")}${this.small("anchorRel", "릴리즈")}${this.small("anchorClip", "설정")}</div>
          </div>
          <h2>앵커</h2>
        </div>
        <div class="panel last" style="width:124px">
          <div class="body">
            ${this.big("profAdd", 32, 32, "프로파일 추가", "", "w76 off")}
            ${this.big("profEdit", 33, 32, "내부", "편집", "w44 off")}
          </div>
          <h2>프로파일</h2>
        </div>
      </section>`;
  }

  private docTab(label: string, on: boolean, closable: boolean) {
    return html`<button class=${classMap({ doc: true, on })}>
      <svg class="bg" viewBox="0 0 130 22" preserveAspectRatio="none"><defs><linearGradient id="g" x2="0" y2="1"><stop stop-color="#8a8a8a"/><stop offset="1" stop-color="#5c5c5c"/></linearGradient></defs><path d="M0 22C7 20 7 0 15 0H115C124 0 123 20 130 22z" fill=${on ? "url(#g)" : "#505050"} /></svg>
      <span>${label}</span>${closable ? icon(8, 8, svg`<path d="m1 1 6 6M7 1 1 7" stroke="#393939" stroke-width="1.600"/>`) : nothing}
    </button>`;
  }

  private toilet(x: number, y: number, dir: number) {
    return svg`<path transform="translate(${x} ${y}) scale(${dir} 1)" d="M0-4h3c2 0 2 1.500 5 0 6-3 10 0 8 5-2 4-6 4-9 2-3-1-3 1-4 1H0"/>`;
  }

  private doorPair(y: number) {
    return svg`<path d="M1050 ${y}h21M1051 ${y - 20}A20 20 0 0 1 1072 ${y}" /><path d="M1050 ${y + 12}h21M1051 ${y + 31}A20 19 0 0 0 1072 ${y + 12}"/>`;
  }

  private drawing() {
    const zig = (x: number, y0: number, y1: number) => {
      let d = `M${x} ${y0}`;
      for (let y = y0, k = 1; y < y1 - 4; y += 5, k++) d += `L${x + (k % 2 ? 5 : 0)} ${y + 5}`;
      return d;
    };
    const zigH = (y: number, x0: number, x1: number) => {
      let d = `M${x0} ${y}`;
      for (let x = x0, k = 1; x < x1 - 4; x += 5, k++) d += `L${x + 5} ${y + (k % 2 ? 4 : 0)}`;
      return d;
    };
    return html`<svg class="drawing" role="img" aria-label="도면"><g transform="translate(-8 -181)" fill="none" stroke-width="1.300">
      <g stroke="#4fa77d">
        <path d="M466.500 254V187.500h3V254M466.500 294.500V419.500H441.500v13H557.500v3M469.500 294.500V419.500H623.500V625.500H510.500M560.500 435v-2.500H620.500V613.500H566.500V466.500H593.500v-2H560.500V455M557.500 455v49.500H524.500v3h28V613.500H501.500L498.500 610V475.500H534M498.500 472.500H534M554 472.500h3.500"/>
        <path d="M446.500 464.500H493.500V576.500H446.500V549.500H441.500V581.500H498.500V459.500H441.500V469.500h5zM441.500 494.500h5V525h-5zM470 582l21 26 43 56h2L510 625"/>
        <path d="m553 700 18.500 41M557 698l18 43M552 699l5-1M343.500 684v31M345.500 684v31"/><circle cx="474.500" cy="619.500" r="5"/>
        <path d="M8 420.500h3M8 588.500h3M8 613.500h3M8 625.500h3"/>
        <path d="M726.500 419.500H867.500V587.500H1079.500v3H855.500V454.500H803.500V622.500H856.500V614.500h9v8H1126.500v3H780M760 625.500H726.500V419.500M760 622.500H738.500V432.500H800.500V622.500H780M803.500 432.500H855.500V452.500H803.500z"/>
        <path d="M1049.500 182V587M1051.500 182V587"/>
        <path d="M1051.500 203.500h75v3h-75M1051.500 270.500h63v3h-63M1051.500 337.500h75v3h-75M1051.500 405.500h63v2h-63M1051.500 472.500h75v3h-75M1074 542.500h5v3h-5M1046.500 626V713.500h3V626"/>
      </g>
      <path d="m399 375 8 10.500 17-10H460v10h7" stroke="#179a5a" stroke-dasharray="7 2"/>
      <g stroke="#b9f76f" stroke-width="3.500"><path d="M1050.500 233v8M1050.500 308v9M1050.500 367v9M1050.500 442v9M1050.500 501v9M1047.500 649v9"/></g>
      <g stroke="#fff" stroke-width="3"><path d="M1050.500 181v21M1050.500 212v21M1050.500 317v19M1050.500 347v20M1050.500 451v19M1050.500 481v20M1048 630v19"/></g>
      <g stroke="#b9f76f" stroke-width="1.400"><path d="M1049.500 181v21M1051.500 181v21M1049.500 212v22M1051.500 212v22M1049.500 317v20M1051.500 317v20M1049.500 347v22M1051.500 347v22M1049.500 450v21M1051.500 450v21M1049.500 481v22M1051.500 481v22M1046.500 628v22M1049.500 628v22"/></g>
      <g stroke="#ffbc78" stroke-width="1.500">
        ${this.doorPair(201.5)}${this.doorPair(335.5)}${this.doorPair(469.5)}
        <path d="M466 254.500h3M467 255.500H489C488 267 480 275 469 274.500 480 274 488 283 489 293H467M558 435.500h22C579 448 570 455 560 455M534 473C534 484 542 494 553.500 494.500V473M553.500 655 535 664M553 655C559 663 556 672 553 678 560 675 569 679 572 688L554 699M345 716H323C323 727 330 735 342 735l-12 6M780 626V603C770 604 762 613 760 626M1054.500 545V523C1066 524 1074 533 1074.500 545M1047 630.500H1067C1067 641 1059 649 1047 649.500"/>
      </g>
      <g stroke="#f08a2c"><path d=${zig(493.5, 465, 577)} /><path d=${zig(441.5, 496, 525)} /><path d=${zig(441.5, 551, 578)} /><path d=${zigH(460, 445, 497)} /><path d=${zigH(577, 445, 497)} /></g>
      <path d="M441.500 468V459.500H498M441.500 496v28M441.500 551v30.500H498" stroke="#f28d80" stroke-width="1.600"/>
      <g stroke="#f00" stroke-width="1.600"><path d="M449.500 467.500v50M449.500 469.500H490V516H449.500M450 472h39v42M446 467.500h4M446 518.500h4M448 492v24M453 494v20M449 494h4M449.500 523V574M449.500 525.500H490V572H449.500M450 528h39v42M448 548v24M453 550v20M449 550h4M446 574.500h4"/></g>
      <g stroke="#00e878" stroke-width="1.500"><path d="M566 518.500h32l-12 6.500 12 14H566M598 539l-12 6.500 12 13H566M598 559l-12 6.500L598 577M566.500 577.500H620M521 558.500h31.500M521 559l12 6.500L521 577M498.500 577.500h54M502.500 578v16C512 594 520 588 519.500 577.500M615.500 578v16C606 594 599 588 599.500 577.500"/></g>
      <g stroke="#10b4f4" stroke-width="1.500">
        <circle cx="505.500" cy="466.500" r="4"/><circle cx="514.500" cy="468" r="4"/><path d="M498.500 472h21M504 466h3M513 468h3M566.500 466.500h13v52h-13zM538.500 507.500h14v34h-14z"/>
        ${[[573, 477], [573, 493], [573, 508.5], [545.5, 516.5], [545.5, 532.5]].map(([x, y]) => svg`<circle cx=${x} cy=${y} r="4.800"/><circle cx=${x} cy=${y} r="2.200"/>`)}
        <path d="M552 545h-5c-5 1-5 7 0 8h5zM547 545v8"/>
        ${this.toilet(567, 529, 1)}${this.toilet(567, 548, 1)}${this.toilet(567, 567, 1)}${this.toilet(552, 567, -1)}${this.toilet(552, 602, -1)}${this.toilet(567, 602, 1)}
      </g>
      <path d="M551.500 588v23M567.500 588v23M522 612h25M572 612h25" stroke="#10a4f4" stroke-width="2.400"/>
      <path d="m380 621 7 3.500-7 3z" fill="#00b8d0"/>
      <path d="M23.500 684v41.500H74M19.500 720.500h9v9h-9zM78.500 711.500l12.500 12.500M91 711.500 78.500 724" stroke="#111"/>
    </g></svg>`;
  }

  private overlays() {
    return html`
      <div class="mdi">
        ${icon(13, 6, svg`<rect x=".5" y=".5" width="12" height="4" fill="#fff" stroke="#444"/>`)}
        ${icon(13, 13, svg`<path d="M3.500.5h9v9h-3M.5 3.500h9v9h-9z" fill="#fff" stroke="#444"/><rect x="3.500" y="6.500" width="3" height="3" fill="#fff" stroke="#444"/>`)}
        ${icon(12, 12, svg`<path d="M.5.500h3.500L6 3.500 8 .5h3.500v2L8.500 6l3 3.500v2H8L6 8.500 4 11.500H.5v-2L3.500 6l-3-3.500z" fill="#fff" stroke="#444"/><path d="m3 2.500 6 7m0-7-6 7" stroke="#444"/>`)}
      </div>
      <div class="cube"><span class="ring"></span><span class="n">북</span><span class="w">서</span><button class="face">평면도</button><span class="e">동</span><span class="s">남</span></div>
      <button class="wcs">WCS ${icon(9, 6, svg`<path d="M.5.500h8L4.500 5z" fill="none" stroke="#a8a8b4"/>`)}</button>
      <div class="nav">
        <svg width="32" height="212" viewBox="0 0 32 212" aria-hidden="true"><g fill="#fafafa" stroke="#d4d4d4">
          <circle cx="26" cy="5" r="3.500" fill="#e4e4e4"/><path d="m24.500 3.500 3 3m0-3-3 3" stroke="#fff"/>
          <path d="M5 29A11 11 0 0 1 16 18h10v11A11 11 0 0 1 5 29z"/><circle cx="16" cy="29" r="5.500"/><path d="m6 37 5-4M26 37l-5-4"/>
          <path d="M13.500 49h5L16 52zM13.500 119h5L16 122zM13.500 157h5L16 160z" fill="#ccc" stroke="none"/><path d="M3 56.500h26M3 164.500h26" />
          <path d="M11 82C6 76 4 74 5 73c2-1 4 2 6 4L9 66c1-3 3-1 3 1l2 7V62c1-2 3-2 3 0l1 12 2-10c2-2 3-1 3 1l-1 10 3-5c2 0 2 1 1 3l-4 9z"/>
          <path d="m5 89 14 14M19 89 5 103M5 93v-4h4M15 89h4v4M5 99v4h4" fill="none" stroke-width="1.500"/><circle cx="20" cy="104" r="5"/><path d="m24 107 4 4" stroke-width="3"/>
          <ellipse cx="15" cy="140" rx="11" ry="4"/><path d="M13 149v-17h-2l4.500-5 4.500 5h-2v17z"/><path d="m10 140-4 3 4 3z" fill="#ccc"/>
          <path d="M4.500 169.500h6v6h-6zM12.500 169.500h6v6h-6zM20.500 169.500h6v6h-6zM4.500 178.500h16v13h-16z"/><path d="m9 181 7 4-7 4z" fill="#c4c4c4"/>
          <circle cx="26" cy="206" r="3.500" fill="#e4e4e4"/><path d="M24 206h4" stroke="#fff"/>
        </g></svg>
      </div>`;
  }

  private toggle(key: string) {
    this.closed = { ...this.closed, [key]: !this.closed[key] };
  }

  private group(title: string, rows: Prop[] | null, tight = false): TemplateResult {
    return html`<div class=${classMap({ group: true, tight })}>
      <button class="head" @click=${() => this.toggle(title)}><span>${title}</span><i></i></button>
      ${rows && !this.closed[title] ? html`<table class="props">${rows.map((r) => html`<tr>
        <td class="flag">${r.auto ? icon(14, 15, art.bolt) : nothing}</td><th scope="row">${r.name}</th>
        <td class=${classMap({ val: true, auto: !!r.auto })}>${r.cells ? html`<span class="cellbtn">${icon(13, 12, art.cells)}${r.value ?? ""}</span>` : r.value ?? ""}</td></tr>`)}</table>` : nothing}
    </div>`;
  }

  private palette() {
    return html`<aside class="palette">
      <div class="shell">
        <div class="rail">
          ${icon(9, 9, svg`<path d="m1 1 7 7M8 1 1 8" stroke="#bdbdbd" stroke-width="1.800"/>`)}
          ${icon(9, 9, svg`<path d="M1.500 0v9M7.500 0v9" stroke="#bdbdbd"/><path d="M7 1.500v6L3 4.500z" fill="#bdbdbd"/>`)}
          ${icon(11, 11, svg`<circle cx="5.500" cy="5.500" r="2.800" fill="none" stroke="#bdbdbd" stroke-width="1.400"/><path d="M5.500 0v2M5.500 9v2M0 5.500h2M9 5.500h2M1.500 1.500 3 3M8 8l1.500 1.500M9.500 1.500 8 3M3 8 1.500 9.500" stroke="#bdbdbd" stroke-width="1.400"/>`)}
          <span class="vert">특성</span>
          ${icon(12, 12, svg`<rect x=".5" y=".5" width="11" height="11" fill="none" stroke="#bdbdbd"/><path d="M3 3h6v3H3zM3 9h6M6 6v3" fill="none" stroke="#bdbdbd"/>`)}
        </div>
        <div class="pane">
          <div class="scroll"></div>
          <div class="pick">
            <span class="combo"><select aria-label="객체 유형"><option>문 (2)</option></select><i></i>${caret}</span>
            ${icon(15, 15, art.quick)}${icon(14, 15, art.pick)}${icon(16, 17, art.quickSel)}
          </div>
          ${this.group("분류", [{ name: "Uniformat Ⅱ", value: "스타일별(*지정되지...", cells: true }])}
          ${this.group("문서", [{ name: "하이퍼링크", cells: true }, { name: "주", cells: true }])}
          ${this.group("특성 세트", null, true)}
          ${this.group("DoorObjects", doorProps)}
          <div class="foot">${icon(13, 13, art.addSet)}${icon(13, 13, art.delSet)}</div>
        </div>
      </div>
      <div class="side"><button><span class="vert">설계</span></button><button><span class="vert">화면표시</span></button><button class="on"><span class="vert">확장 데이터</span></button></div>
    </aside>`;
  }

  private status() {
    const b = (w: number, content: unknown, cls = "") => html`<button class=${cls} style="width:${w}px">${content}</button>`;
    return html`<footer class="status">
      <div class="cell coords"><span class="xyz">1909.74714, 1429.94219, 0.00000</span></div>
      <div class="cell">${b(27, "모형", "model")}</div>
      <div class="cell">${b(63, html`${icon(16, 16, art.grid)}${icon(16, 16, art.snap)}${caret}`)}</div>
      <div class="cell">${b(25, icon(17, 15, art.dyn))}${b(64, html`${icon(15, 15, art.ortho)}${icon(16, 16, art.polar)}${caret}`)}${b(63, html`${icon(16, 16, art.iso)}${icon(16, 16, art.osnap)}${caret}`)}${b(25, icon(16, 15, art.lweight))}${b(25, icon(15, 15, art.cycle))}</div>
      <div class="cell">${b(157, html`${icon(15, 16, svg`${art.anno}<circle cx="12" cy="4" r="2" fill="none" stroke="#c9c9c9"/>`)}${icon(15, 16, svg`${art.anno}<path d="m13 1-3 4h2l-2 3" fill="none" stroke="#c9c9c9" stroke-width="1.300"/>`)}${icon(15, 16, art.anno)}<span>1/8" = 1'-0"</span>${caret}`)}</div>
      <div class="cell">${b(39, html`${icon(14, 14, art.gear)}${caret}`)}${b(25, icon(14, 14, art.plus))}</div>
      <div class="cell">${b(94, html`<span>Medium Detail</span>${caret}`)}${b(89, html`${icon(16, 16, art.cut)}<span>42.00000</span>`)}</div>
      <div class="cell">${b(83, html`${icon(17, 16, art.elev)}<span>+0.00000</span>`)}</div>
      <div class="cell">${b(24, icon(15, 16, art.shapes))}</div>
      <div class="cell">${b(24, icon(18, 18, art.clean))}</div>
      <div class="cell">${b(79, html`${icon(16, 16, art.box3)}${icon(16, 15, art.layer)}${icon(15, 15, art.trust)}${icon(15, 16, art.warn)}`)}</div>
      <div class="cell">${b(48, html`${icon(16, 14, art.full)}${icon(15, 14, art.burger)}`)}</div>
    </footer>`;
  }

  private layoutTab(label: string, on: boolean) {
    return html`<button class=${classMap({ lay: true, on })}><svg viewBox="0 0 54 18" preserveAspectRatio="none" aria-hidden="true"><path d="M0 0C8 2 4 18 13 18H40C48 18 46 2 54 0z" fill=${on ? "#787878" : "#555"} /></svg><span>${label}</span></button>`;
  }

  render() {
    return html`<div class="window">
      ${this.titleBar()}
      <main class="client">
        ${this.ribbon()}
        <div class="docs">${this.docTab("시작", false, false)}${this.docTab("Typical Core*", true, true)}${this.docTab("Typical Core", false, true)}
          <button class="plus" aria-label="새 도면">${icon(9, 9, svg`<path d="M4.500 0v9M0 4.500h9" stroke="#c8c8c8" stroke-width="2"/>`)}</button></div>
        <div class="stage">${this.drawing()}${this.overlays()}${this.palette()}</div>
        <div class="cmd"><div class="grip"></div><div>
          <div class="hist"><div>명령:</div><div>명령:</div></div>
          <div class="entry"><label for="cmd">명령:</label><input id="cmd" /></div>
        </div></div>
        <div class="layouts">${this.layoutTab("모형", true)}${this.layoutTab("Work", false)}<button class="add" aria-label="새 배치">${icon(9, 9, svg`<path d="M4.500 0v9M0 4.500h9" stroke="#c8c8c8" stroke-width="2"/>`)}</button></div>
        ${this.status()}
      </main>
    </div>`;
  }
}
